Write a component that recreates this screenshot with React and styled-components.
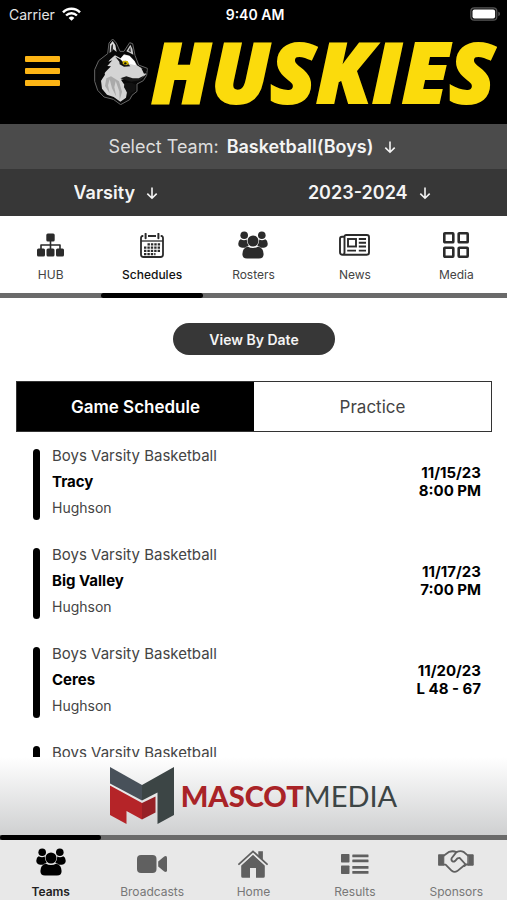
import React, { useState } from "react";
import styled, { createGlobalStyle } from "styled-components";

const GlobalStyle = createGlobalStyle`
  * { box-sizing: border-box; }
  body { margin: 0; background: #fff; }
  body, button, select { font-family: Inter, "Liberation Sans", sans-serif; }
  button, select { border: 0; padding: 0; background: none; cursor: pointer; }
`;

const Shell = styled.div`
  display: flex;
  flex-direction: column;
  height: 100vh;
  overflow: hidden;
  color: #000;
`;

const StatusBar = styled.div`
  display: grid;
  grid-template-columns: 1fr auto 1fr;
  align-items: center;
  height: 28px;
  padding: 0 6px 0 9px;
  background: #000;
  color: #fff;
  font-size: 14px;
  svg { display: block; }
`;

const Carrier = styled.div`
  display: flex;
  align-items: center;
  gap: 7px;
  color: #e4e4e4;
`;

const Clock = styled.time`
  font-weight: 600;
`;

const Battery = styled.div`
  justify-self: end;
`;

const Masthead = styled.header`
  display: flex;
  align-items: center;
  justify-content: space-between;
  height: 96px;
  padding: 0 12px 10px 25px;
  background: #000;
`;

const MenuButton = styled.button`
  display: flex;
  flex-direction: column;
  gap: 6px;
  width: 35px;
`;

const MenuLine = styled.span`
  height: 6px;
  border-radius: 1px;
  background: #fdb515;
`;

const Brand = styled.a`
  display: flex;
  align-items: center;
  gap: 2px;
  color: #fbdb0c;
  text-decoration: none;
`;

const BrandName = styled.span`
  font: italic 800 84px/80px "Open Sans", sans-serif;
  -webkit-text-stroke: 2px #fbdb0c;
`;

const FilterBar = styled.div`
  display: flex;
  align-items: center;
  justify-content: center;
  gap: ${(p) => (p.$split ? 0 : 8)}px;
  height: ${(p) => (p.$split ? 47 : 45)}px;
  background: ${(p) => (p.$split ? "#373737" : "#4b4b4b")};
  color: #f4f4f4;
  font-size: 18px;
`;

const FilterCell = styled.div`
  display: flex;
  flex: ${(p) => (p.$fill ? 1 : "none")};
  align-items: center;
  justify-content: center;
  gap: 11px;
  padding-right: ${(p) => (p.$fill ? 22 : 2)}px;
`;

const FilterLabel = styled.label`
  color: #dedede;
`;

const FilterSelect = styled.select`
  appearance: none;
  field-sizing: content;
  color: inherit;
  font-size: 18px;
  font-weight: 600;
`;

const TabNav = styled.nav`
  display: grid;
  grid-template-columns: repeat(5, 1fr);
  flex: none;
`;

const TabItem = styled.button`
  display: flex;
  flex-direction: column;
  align-items: center;
  height: 77px;
  padding-top: 13px;
  color: ${(p) => (p.$active ? "#111" : "#444")};
  font-size: 12px;
  line-height: 16px;
  font-weight: ${(p) => (p.$active ? 500 : 400)};
`;

const IconBox = styled.span`
  display: grid;
  place-items: center;
  height: 32px;
  padding-top: ${(p) => (p.$low ? 4 : 0)}px;
  margin-bottom: 6px;
  color: ${(p) => p.$color};
  svg { display: block; }
`;

const Track = styled.div`
  display: grid;
  grid-template-columns: repeat(5, 1fr);
  flex: none;
  height: 5px;
  background: #6a6a6a;
`;

const Thumb = styled.span`
  grid-column: ${(p) => p.$index + 1};
  border-radius: 3px;
  background: #000;
`;

const Content = styled.main`
  display: flex;
  flex: 1;
  flex-direction: column;
  min-height: 0;
  overflow: hidden;
  padding: 25px 15px 0 16px;
`;

const PillButton = styled.button`
  align-self: center;
  flex: none;
  height: 32px;
  padding: 0 36px;
  border-radius: 16px;
  background: #373737;
  color: #f4f4f4;
  font-size: 14px;
  font-weight: 600;
`;

const Segments = styled.div`
  display: flex;
  flex: none;
  height: 51px;
  margin-top: 26px;
  border: 1px solid #333;
`;

const Segment = styled.button`
  flex: 1;
  background: ${(p) => (p.$active ? "#000" : "#fff")};
  color: ${(p) => (p.$active ? "#fff" : "#444")};
  font-size: 17px;
  font-weight: ${(p) => (p.$active ? 600 : 400)};
`;

const GameList = styled.ul`
  flex: 1;
  min-height: 0;
  margin: 0;
  padding: 11px 11px 0 17px;
  overflow: hidden;
  list-style: none;
`;

const Game = styled.li`
  display: flex;
  align-items: center;
  height: 78px;
  margin-bottom: 21px;
`;

const Marker = styled.span`
  align-self: flex-end;
  width: 7px;
  height: 71px;
  margin: 0 12px 1px 0;
  border-radius: 4px;
  background: #000;
`;

const GameInfo = styled.div`
  flex: 1;
  line-height: 26px;
`;

const League = styled.div`
  color: #444;
  font-size: 15px;
`;

const Opponent = styled.div`
  font-size: 15px;
  font-weight: 700;
`;

const Place = styled.div`
  color: #444;
  font-size: 14px;
`;

const When = styled.div`
  font-size: 15px;
  font-weight: 700;
  line-height: 18px;
  text-align: right;
`;

const Sponsor = styled.a`
  display: flex;
  flex: none;
  align-items: center;
  justify-content: center;
  gap: 7px;
  height: 78px;
  background: linear-gradient(#fff, #cfd0d1);
  color: #3d4545;
  font: 400 29px/40px Lato, sans-serif;
  text-decoration: none;
  svg { display: block; }
`;

const SponsorStrong = styled.b`
  color: #a92327;
  font-weight: 900;
`;

const BottomNav = styled.nav`
  display: grid;
  grid-template-columns: repeat(5, 1fr);
  flex: none;
  height: 60px;
  background: #e8e8e8;
`;

const BottomItem = styled.a`
  display: flex;
  flex-direction: column;
  align-items: center;
  padding-top: 6px;
  color: ${(p) => (p.$active ? "#222" : "#777")};
  font-size: 12px;
  line-height: 16px;
  font-weight: ${(p) => (p.$active ? 600 : 400)};
  text-decoration: none;
`;

const WifiIcon = () => (
  <svg width="19" height="14" viewBox="0 0 19 14" fill="none" stroke="#fff">
    <path d="M1 5.3a12 12 0 0 1 17 0" strokeWidth="2.5" />
    <path d="M4.1 8.5a7.6 7.6 0 0 1 10.8 0" strokeWidth="2.4" />
    <path d="M9.5 13.8 6.6 10.9a4.1 4.1 0 0 1 5.8 0z" fill="#fff" stroke="none" />
  </svg>
);

const BatteryIcon = () => (
  <svg width="31" height="14" viewBox="0 0 31 14">
    <rect x=".8" y=".8" width="26" height="12.4" rx="3.5" fill="#111" stroke="#555" strokeWidth="1.2" />
    <rect x="2.5" y="2.5" width="22.6" height="9" rx="2" fill="#fff" />
    <path d="M28.3 4.8c2.2.6 2.2 3.8 0 4.4z" fill="#555" />
  </svg>
);

const HuskyIcon = () => (
  <svg width="56" height="68" viewBox="26 27 168 204" aria-hidden="true">
    <path d="M70 77 74 45 85 33 96 45 107 70 119 70 136 44 145 47 152 82 163 111 189 121 187 142 177 158 158 168 158 190 143 202 136 215 109 230 87 214 59 207 40 187 31 160 31 125 43 98z" fill="#080808" stroke="#666" strokeWidth="3" strokeLinejoin="round" />
    <path d="M76 75 77 49 85 39 93 51 97 72 87 64z" fill="#d9d9d9" />
    <path d="M79 71 81 53 86 47 86 65z" fill="#343434" />
    <path d="M126 70 138 50 144 62 147 80 136 74z" fill="#ccc" />
    <path d="M132 68 138 57 140 73z" fill="#333" />
    <path d="M66 108 78 94 92 82 109 91 119 79 136 83 151 99 158 112 176 123 186 129 184 140 169 153 149 157 128 151 110 155 118 167 135 178 124 181 128 193 125 209 108 221 88 207 68 200 53 182 50 158 62 140 58 128z" fill="#d4d4d4" />
    <path d="M105 96 119 81 135 84 150 100 155 112 136 108 124 96 113 103z" fill="#fff" />
    <path d="M93 86 108 94 119 105 131 107 138 115 119 116 106 109 105 101z" fill="#101010" />
    <path d="M115 98 130 99 134 108 125 112 115 108z" fill="#d0b500" />
    <circle cx="123" cy="106" r="3.5" fill="#111" />
    <path d="M56 105 77 86 72 101 84 97 69 114 80 115 64 131 54 145 48 164 40 150 41 124z" fill="#090909" />
    <path d="M171 121 187 124 186 136 179 137z" fill="#080808" />
    <path d="M181 142 163 151 145 151 126 145 108 151 121 155 141 161 168 157z" fill="#191919" />
    <path d="M120 165 142 164 154 170 153 188 139 196 132 209 127 191 119 178z" fill="#111" />
    <path d="M66 151 62 174 76 196 71 172 76 154 83 181 96 206 90 178 94 159 105 190 106 217 113 191 104 160 80 145z" fill="#aaa" />
  </svg>
);

const ArrowIcon = () => (
  <svg width="12" height="14" viewBox="0 0 12 14" fill="none" stroke="#f4f4f4" strokeWidth="1.6" aria-hidden="true">
    <path d="M6 1.5v10.7M1.3 7.6 6 12.2l4.7-4.6" />
  </svg>
);

const HubIcon = () => (
  <svg width="27" height="24" viewBox="0 0 27 24" fill="currentColor">
    <rect x="9.3" y=".5" width="8.4" height="8" rx="1.5" />
    <rect x="0" y="15.6" width="8" height="8" rx="1.5" />
    <rect x="9.5" y="15.6" width="8" height="8" rx="1.5" />
    <rect x="19" y="15.6" width="8" height="8" rx="1.5" />
    <path d="M13.5 8v8M4 16v-4h19v4" fill="none" stroke="currentColor" strokeWidth="1.6" strokeLinejoin="round" />
  </svg>
);

const CalendarIcon = () => (
  <svg width="24" height="25" viewBox="0 0 24 25" fill="none" stroke="currentColor">
    <path d="M3.3 3H2.7Q1 3 1 5v16.5Q1 24 3.5 24h17q2.5 0 2.5-2.5V5q0-2-1.7-2h-.6M8 3h8" strokeWidth="1.8" />
    <path d="M1 8h22" strokeWidth="1.3" />
    <path d="M5.6.8v4.5M18.4.8v4.5" strokeWidth="2" strokeLinecap="round" />
    <path d="M7.5 11.3h13M4 14.6h16.5M4 17.9h16.5M4 21.1h11.5" strokeWidth="2.2" strokeDasharray="2.4 1" />
  </svg>
);

const GroupIcon = () => (
  <svg width="30" height="28" viewBox="0 0 30 28" fill="currentColor">
    <circle cx="6.2" cy="4.2" r="3.8" />
    <circle cx="23.8" cy="4.2" r="3.8" />
    <path d="M2.7 8.2q3 1.9 6 .4.1 3.8 2.1 5.9-2.2.9-3.6 2.3H4.1Q0 16 .3 12.5q.2-3.4 2.4-4.3zM27.3 8.2q-3 1.9-6 .4-.1 3.8-2.1 5.9 2.2.9 3.6 2.3h3.1q4.1-.8 3.8-4.3-.2-3.4-2.4-4.3z" />
    <circle cx="15" cy="10" r="5.5" />
    <path d="M9.6 15.5q5.4 3 10.8 0 5.2 1.9 5.2 7.5 0 4.6-4.6 4.6H9q-4.6 0-4.6-4.6 0-5.6 5.2-7.5z" />
  </svg>
);

const NewsIcon = () => (
  <svg width="31" height="22" viewBox="0 0 31 22" fill="none" stroke="currentColor" strokeWidth="1.9">
    <path d="M5.5 2.5Q5.5 1 7.2 1h20.6Q30 1 30 3v15.5q0 2.3-2.3 2.3H3.6Q1 20.8 1 18.2V5q0-2.2 2-2.2h2.5v15.4q0 2.6-2 2.6" />
    <rect x="9" y="5" width="8" height="7.5" />
    <path d="M19.8 5h7.2M19.8 8.7h7.2M19.8 12.5h7.2M8.2 16.6h8.8M19.8 16.6h7.2" />
  </svg>
);

const GridIcon = () => (
  <svg width="26" height="26" viewBox="0 0 26 26" fill="none" stroke="currentColor" strokeWidth="2.6">
    <rect x="1.3" y="1.3" width="9" height="9" rx=".6" />
    <rect x="15.7" y="1.3" width="9" height="9" rx=".6" />
    <rect x="1.3" y="15.7" width="9" height="9" rx=".6" />
    <rect x="15.7" y="15.7" width="9" height="9" rx=".6" />
  </svg>
);

const CameraIcon = () => (
  <svg width="30" height="18" viewBox="0 0 30 18" fill="currentColor">
    <rect width="19.5" height="18" rx="4" />
    <path d="m21.2 6.5 6-5q2.8-1.3 2.8 1.3v12.4q0 2.6-2.8 1.3l-6-5z" />
  </svg>
);

const HomeIcon = () => (
  <svg width="30" height="28" viewBox="0 0 30 28" fill="currentColor">
    <path d="M3.2 15.6 15 4.8l11.8 10.8v10.6q0 1.6-1.6 1.6H18V18h-6v9.8H4.800q-1.600 0-1.600-1.600z" />
    <path d="M20.3 1.3h4.600v9.500l-4.600-4.300z" />
    <path d="M1.500 15.900 15 3.500l13.500 12.400" fill="none" stroke="#e8e8e8" strokeWidth="1.3" />
    <path d="M1 14.200 15 1.400l14 12.800" fill="none" stroke="currentColor" strokeWidth="1.8" strokeLinecap="round" />
  </svg>
);

const ResultsIcon = () => (
  <svg width="28" height="20" viewBox="0 0 28 20" fill="currentColor">
    <rect width="8.5" height="8.5" rx=".7" />
    <rect y="11.5" width="8.5" height="8.5" rx=".7" />
    <rect x="11.3" y=".5" width="16.2" height="2.8" rx=".5" />
    <rect x="11.3" y="5.5" width="16.2" height="2.8" rx=".5" />
    <rect x="11.3" y="12" width="16.2" height="2.8" rx=".5" />
    <rect x="11.3" y="17" width="16.2" height="2.8" rx=".5" />
  </svg>
);

const HandshakeIcon = () => (
  <svg width="36" height="24" viewBox="0 0 36 24" fill="none" stroke="currentColor" strokeWidth="1.8" strokeLinejoin="round" strokeLinecap="round">
    <path d="M.8 4.8h5v10.4h-5zM30.2 4.8h5v10.4h-5z" fill="currentColor" strokeWidth="1" />
    <path d="M6 5.600 11.200 1.800q4-1.200 7.200.3 4-1.600 7-.3L30 5.600M6 14.600h1.600l6.200 6.200q2.600 2 5.400.3l7.200-5.800q1-.8 2.200-.8H30" />
    <path d="m18.400 2.100-4.800 6.200q-.7 2.600 1.400 3.300 1.800.4 4.400-3.200l2.200-.6 5.600 6.200q.6 1-.6 2" />
  </svg>
);

const MascotIcon = () => (
  <svg width="64" height="58" viewBox="0 0 64 58" aria-hidden="true">
    <path d="M0 0 32 18v15.5L0 16.5z" fill="#48515a" />
    <path d="M32 18 64 0v48l-16.5 9V25.5l-15.500 8z" fill="#3c4545" />
    <path d="M0 18.500 32 36v16.500L16.500 44v13L0 48z" fill="#b52428" />
    <path d="m32 36 13.500-6.500v16L32 52.500z" fill="#972126" />
  </svg>
);

const SECTIONS = [
  { name: "HUB", icon: <HubIcon /> },
  { name: "Schedules", icon: <CalendarIcon /> },
  { name: "Rosters", icon: <GroupIcon /> },
  { name: "News", icon: <NewsIcon /> },
  { name: "Media", icon: <GridIcon /> },
];

const DESTINATIONS = [
  { name: "Teams", icon: <GroupIcon /> },
  { name: "Broadcasts", icon: <CameraIcon />, low: true },
  { name: "Home", icon: <HomeIcon />, low: true },
  { name: "Results", icon: <ResultsIcon />, low: true },
  { name: "Sponsors", icon: <HandshakeIcon /> },
];

const GAMES = [
  { opponent: "Tracy", date: "11/15/23", detail: "8:00 PM" },
  { opponent: "Big Valley", date: "11/17/23", detail: "7:00 PM" },
  { opponent: "Ceres", date: "11/20/23", detail: "L 48 - 67" },
  { opponent: "", date: "", detail: "" },
];

export default function App() {
  const [section, setSection] = useState(1);
  const [schedule, setSchedule] = useState(0);

  return (
    <Shell>
      <GlobalStyle />
      <StatusBar>
        <Carrier>Carrier <WifiIcon /></Carrier>
        <Clock>9:40 AM</Clock>
        <Battery><BatteryIcon /></Battery>
      </StatusBar>
      <Masthead>
        <MenuButton aria-label="Menu"><MenuLine /><MenuLine /><MenuLine /></MenuButton>
        <Brand href="#home"><HuskyIcon /><BrandName>HUSKIES</BrandName></Brand>
      </Masthead>
      <FilterBar>
        <FilterLabel htmlFor="team">Select Team:</FilterLabel>
        <FilterCell>
          <FilterSelect id="team"><option>Basketball(Boys)</option></FilterSelect>
          <ArrowIcon />
        </FilterCell>
      </FilterBar>
      <FilterBar $split>
        <FilterCell $fill>
          <FilterSelect aria-label="Level"><option>Varsity</option></FilterSelect>
          <ArrowIcon />
        </FilterCell>
        <FilterCell $fill>
          <FilterSelect aria-label="Season"><option>2023-2024</option></FilterSelect>
          <ArrowIcon />
        </FilterCell>
      </FilterBar>
      <TabNav>
        {SECTIONS.map((s, i) => (
          <TabItem key={s.name} $active={i === section} onClick={() => setSection(i)}>
            <IconBox $color="#2b2b2b">{s.icon}</IconBox>
            {s.name}
          </TabItem>
        ))}
      </TabNav>
      <Track><Thumb $index={section} /></Track>
      <Content>
        <PillButton>View By Date</PillButton>
        <Segments role="tablist">
          {["Game Schedule", "Practice"].map((name, i) => (
            <Segment key={name} role="tab" aria-selected={i === schedule} $active={i === schedule} onClick={() => setSchedule(i)}>
              {name}
            </Segment>
          ))}
        </Segments>
        <GameList>
          {GAMES.map((g, i) => (
            <Game key={i}>
              <Marker />
              <GameInfo>
                <League>Boys Varsity Basketball</League>
                <Opponent>{g.opponent || "\u00a0"}</Opponent>
                <Place>{g.opponent ? "Hughson" : "\u00a0"}</Place>
              </GameInfo>
              <When>
                <div>{g.date}</div>
                <div>{g.detail}</div>
              </When>
            </Game>
          ))}
        </GameList>
      </Content>
      <Sponsor href="#sponsor">
        <MascotIcon />
        <span><SponsorStrong>MASCOT</SponsorStrong>MEDIA</span>
      </Sponsor>
      <Track><Thumb $index={0} /></Track>
      <BottomNav>
        {DESTINATIONS.map((d, i) => (
          <BottomItem key={d.name} href={"#" + d.name.toLowerCase()} $active={i === 0}>
            <IconBox $low={d.low} $color={i === 0 ? "#000" : "#606060"}>{d.icon}</IconBox>
            {d.name}
          </BottomItem>
        ))}
      </BottomNav>
    </Shell>
  );
}
